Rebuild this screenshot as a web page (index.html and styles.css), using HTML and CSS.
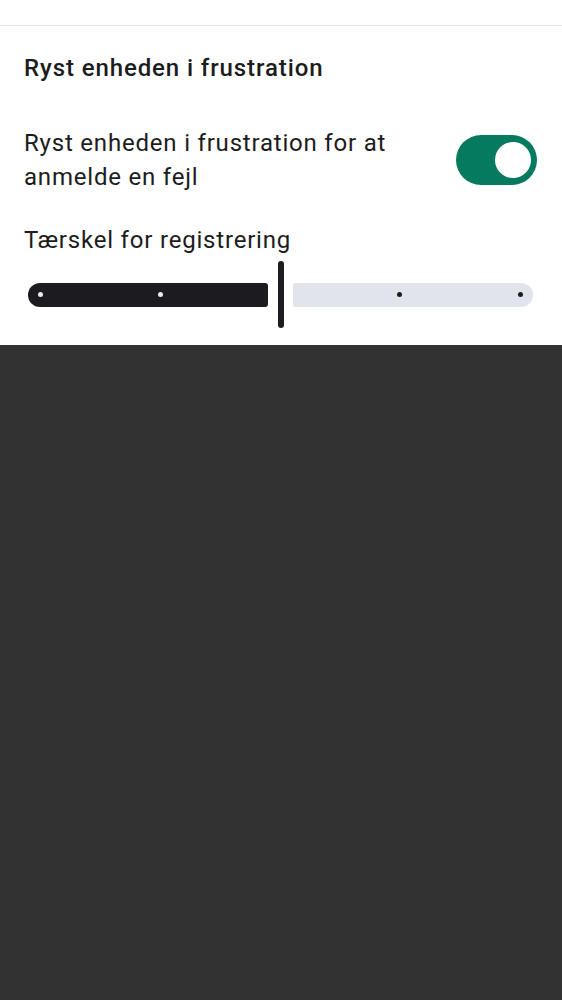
FILE: index.html
```html
<!DOCTYPE html>
<html lang="da">
<head>
<meta charset="utf-8">
<title>Ryst enheden i frustration</title>
<link rel="stylesheet" href="styles.css">
</head>
<body>
<div class="topbar"></div>
<section class="panel">
  <h2 class="title">Ryst enheden i frustration</h2>
  <div class="row">
    <p class="row-text">Ryst enheden i frustration for at anmelde en fejl</p>
    <div class="switch" role="switch" aria-checked="true"><span class="thumb"></span></div>
  </div>
  <p class="label">Tærskel for registrering</p>
  <div class="slider">
    <div class="track active"><span class="dot"></span><span class="dot"></span></div>
    <div class="handle"></div>
    <div class="track inactive"><span class="dot"></span><span class="dot"></span></div>
  </div>
</section>
</body>
</html>
```
FILE: styles.css
```css
html, body {
  margin: 0;
  padding: 0;
}
body {
  background: #323232;
  font-family: Roboto, "Noto Sans", sans-serif;
  color: #1c1c20;
  min-height: 1000px;
}
.topbar {
  height: 25px;
  background: #ffffff;
  border-bottom: 1px solid #e6e6ea;
}
.panel {
  background: #ffffff;
  padding: 28px 25px 17px 24px;
}
.title {
  margin: 0;
  font-size: 24px;
  font-weight: 500;
  letter-spacing: 0.9px;
  line-height: 28px;
}
.row {
  display: flex;
  align-items: center;
  justify-content: space-between;
  margin-top: 44px;
}
.row-text {
  margin: 0;
  font-size: 24px;
  letter-spacing: 0.8px;
  line-height: 34px;
  max-width: 400px;
}
.switch {
  position: relative;
  width: 81px;
  height: 50px;
  border-radius: 25px;
  background: #057a5e;
  flex: 0 0 auto;
}
.thumb {
  position: absolute;
  right: 6px;
  top: 7px;
  width: 36px;
  height: 36px;
  border-radius: 50%;
  background: #ffffff;
}
.label {
  margin: 29px 0 0;
  font-size: 24px;
  letter-spacing: 0.8px;
  line-height: 34px;
}
.slider {
  display: flex;
  align-items: center;
  height: 67px;
  margin: 4px 4px 0 4px;
}
.track {
  height: 24px;
  display: flex;
  align-items: center;
  box-sizing: border-box;
}
.track.active {
  flex: 0 0 240px;
  background: #1c1c20;
  border-radius: 12px 3px 3px 12px;
  padding-left: 10px;
  gap: 115px;
}
.track.inactive {
  flex: 1 1 auto;
  background: #e1e4eb;
  border-radius: 3px 12px 12px 3px;
  justify-content: flex-end;
  padding-right: 10px;
  gap: 116px;
}
.dot {
  width: 5px;
  height: 5px;
  border-radius: 50%;
}
.active .dot { background: #e8eaf0; }
.inactive .dot { background: #1c1c20; }
.handle {
  flex: 0 0 6px;
  height: 67px;
  border-radius: 3px;
  background: #1c1c20;
  margin: 0 9px 0 10px;
}
```
